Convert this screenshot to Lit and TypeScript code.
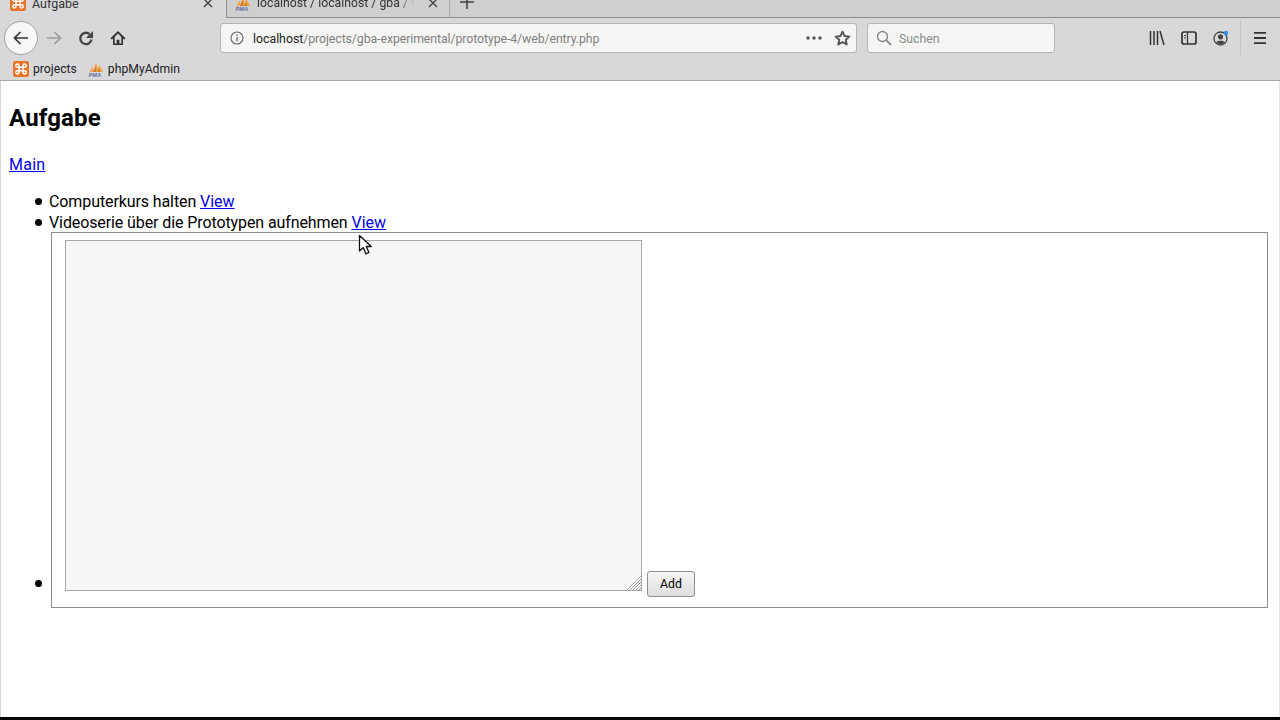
import { LitElement, html, css, svg } from "lit";
import { customElement } from "lit/decorators.js";

const xampp = svg`<svg class="fav" viewBox="0 0 16 16"><rect x="0" y="0" width="16" height="16" rx="2" fill="#e9752a"/><path d="M6 6V4.7A1.6 1.6 0 1 0 4.4 6.3H11.6A1.6 1.6 0 1 0 10 4.7V11.3A1.6 1.6 0 1 0 11.6 9.7H4.4A1.6 1.6 0 1 0 6 11.3V6" fill="none" stroke="#fff" stroke-width="1.5"/></svg>`;
const pma = svg`<svg class="fav" viewBox="0 0 16 16"><path d="M1.5 11 4.5 5.5 5.5 10.5zM5.5 10.5 8 1 10.5 10.5zM10.5 10.5 10.5 4 13 7 15 11z" fill="#f2a03c"/><path d="M5 11 7.5 5.5 8.5 11zM9.5 11l1-4 2 4z" fill="#d17a22"/><text x="0.5" y="15.8" font-size="5.6" font-weight="700" font-style="italic" font-family="Liberation Sans, sans-serif" fill="#5f6c99">PMA</text></svg>`;

@customElement("app-root")
export class AppRoot extends LitElement {
  static styles = css`
    :host { display: flex; flex-direction: column; height: 720px; overflow: hidden; position: relative;
      font-family: Roboto, sans-serif; background: #fff; color: #000; }
    .tabs { height: 18px; flex: none; display: flex; background: #cfcfcf; overflow: hidden; font-size: 12.5px; color: #333; }
    .tab { flex: none; display: flex; align-items: flex-end; box-sizing: border-box; position: relative; }
    .tab.active { width: 226px; height: 18px; background: #d8d8da; }
    .tab.other { width: 224px; height: 18px; border-left: 1px solid #8f8f8f; border-right: 1px solid #a8a8a8; border-bottom: 1px solid #8f8f8f; font-size: 12.25px; }
    .tab-inner { display: flex; align-items: center; height: 20px; width: 100%; box-sizing: border-box; flex: none; gap: 6px; }
    .tab.active .tab-inner { padding-left: 10px; margin-bottom: 5px; }
    .tab.other .tab-inner { padding-left: 8px; margin-bottom: 4px; }
    .tab-title { flex: 1; overflow: hidden; white-space: nowrap; }
    .tab.other .tab-title { -webkit-mask-image: linear-gradient(to right, #000 90%, transparent); mask-image: linear-gradient(to right, #000 90%, transparent); }
    .close { flex: none; width: 10px; height: 10px; margin: 0 13px 0 8px; }
    .tab.other .close { margin: 0 11px 0 8px; }
    .fillbar { flex: 1; border-bottom: 1px solid #8f8f8f; height: 18px; box-sizing: border-box; overflow: hidden; }
    .plus { display: block; margin: -5px 0 0 10px; width: 14px; height: 14px; }
    .nav { height: 40px; flex: none; display: flex; align-items: center; background: #d8d8da; }
    .back { margin-left: 4px; width: 34px; height: 34px; box-sizing: border-box; border-radius: 50%; border: 1px solid #a2a2a4; background: #f7f7f7; display: flex; align-items: center; justify-content: center; flex: none; }
    .btn { width: 32px; height: 32px; display: flex; align-items: center; justify-content: center; flex: none; }
    .ic { width: 16px; height: 16px; display: block; }
    .url { margin-left: 86px; width: 637px; height: 30px; box-sizing: border-box; flex: none; border: 1px solid #b5b5b8; border-radius: 3px; background: #f5f6f3; display: flex; align-items: center; font-size: 12.3px; }
    .info { width: 14px; height: 14px; margin-left: 9px; flex: none; }
    .address { margin-left: 9px; padding-top: 1px; flex: 1; color: #7f7f7f; white-space: nowrap; letter-spacing: -0.08px; }
    .address b { font-weight: 400; color: #222; letter-spacing: 0; }
    .dots { width: 16px; height: 4px; margin-right: 12px; flex: none; }
    .star { width: 17px; height: 17px; margin-right: 5px; flex: none; }
    .search { margin-left: 10px; width: 188px; height: 30px; box-sizing: border-box; flex: none; border: 1px solid #b5b5b8; border-radius: 3px; background: #f5f6f3; display: flex; align-items: center; font-size: 12.3px; color: #8a8a8a; }
    .search span { padding-top: 1px; }
    .search svg { width: 16px; height: 16px; margin-left: 8px; margin-right: 7px; flex: none; }
    .spacer { flex: 1; }
    .sep { width: 1px; height: 34px; background: #c4c4c6; margin: 0 3px; flex: none; }
    .endgap { width: 4px; flex: none; }
    .marks { height: 23px; flex: none; box-sizing: border-box; border-bottom: 1px solid #a9a9ac; background: #d8d8da; display: flex; align-items: center; font-size: 12.2px; color: #222; padding-left: 13px; padding-bottom: 1px; }
    .mark { display: flex; align-items: center; gap: 4px; margin-right: 11px; }
    .fav { width: 16px; height: 16px; flex: none; display: block; }
    .page { flex: 1; box-sizing: border-box; border-left: 1px solid #d4d4d4; border-right: 1px solid #e4e4e4; padding: 0 8px; font-size: 16px; line-height: 21px; min-height: 0; }
    h1 { font-size: 24px; font-weight: 700; line-height: 28px; margin: 23px 0 22px; letter-spacing: 0.15px; }
    p { margin: 0 0 16px; line-height: 21px; }
    p a { letter-spacing: 0.25px; }
    a { color: #0000ee; text-decoration: underline; }
    ul { margin: 0; padding-left: 40px; list-style: none; }
    li { position: relative; }
    li::before { content: ""; position: absolute; left: -14px; top: 7px; width: 7px; height: 7px; border-radius: 50%; background: #000; }
    li.with-form::before { top: auto; bottom: 21px; }
    .t { letter-spacing: -0.1px; }
    .box { box-sizing: border-box; width: 1217px; margin: -1px 0 0 2px; border: 1px solid #8d8d8d; padding: 7px 13px 16px; }
    .row { display: flex; align-items: flex-end; gap: 5px; }
    .area-wrap { position: relative; flex: none; width: 577px; height: 351px; }
    textarea { display: block; width: 100%; height: 100%; box-sizing: border-box; background: #f5f7f4; border: 1px solid #a9a9a9; resize: none; margin: 0; padding: 2px; outline: none; }
    .grip { position: absolute; right: 1px; bottom: 1px; width: 14px; height: 14px; }
    .add { width: 48px; height: 26px; box-sizing: border-box; margin-bottom: -6px; padding: 0; border: 1px solid #8e8e8e; border-radius: 3px; background: linear-gradient(#f6f6f6, #dedede); font: 12.3px Roboto, sans-serif; color: #000; }
    .bottom { height: 3px; flex: none; background: #050505; }
    .cursor { position: absolute; left: 358px; top: 234px; width: 14px; height: 22px; }
  `;

  render() {
    return html`
      <div class="tabs">
        <div class="tab active"><div class="tab-inner">${xampp}<span class="tab-title">Aufgabe</span>
          <svg class="close" viewBox="0 0 10 10"><path d="M1 1l8 8M9 1l-8 8" stroke="#444" stroke-width="1.4"/></svg></div></div>
        <div class="tab other"><div class="tab-inner">${pma}<span class="tab-title">localhost / localhost / gba / tasks</span>
          <svg class="close" viewBox="0 0 10 10"><path d="M1 1l8 8M9 1l-8 8" stroke="#444" stroke-width="1.4"/></svg></div></div>
        <div class="fillbar"><svg class="plus" viewBox="0 0 14 14"><path d="M7 0v14M0 7h14" stroke="#444" stroke-width="1.6"/></svg></div>
      </div>
      <div class="nav">
        <div class="back"><svg class="ic" viewBox="0 0 16 16"><path d="M7.5 2 1.5 8l6 6M2 8h13" fill="none" stroke="#333" stroke-width="1.7"/></svg></div>
        <div class="btn"><svg class="ic" viewBox="0 0 16 16"><path d="M8.5 2l6 6-6 6M14 8H1" fill="none" stroke="#9c9c9e" stroke-width="1.7"/></svg></div>
        <div class="btn"><svg class="ic" viewBox="0 0 16 16"><path d="M13.6 9.6A5.7 5.7 0 1 1 11.6 4" fill="none" stroke="#444" stroke-width="2.3"/><path d="M15 1v7H8z" fill="#444"/></svg></div>
        <div class="btn"><svg class="ic" viewBox="0 0 16 16"><path d="M8 1 .5 8.2l1.3 1.3L3 8.4V15h10V8.4l1.2 1.1 1.3-1.3zM6.6 13.4V9.8h2.8v3.6H11.3V7L8 3.6 4.7 7v6.4z" fill="#333" fill-rule="evenodd"/></svg></div>
        <div class="url">
          <svg class="info" viewBox="0 0 14 14"><circle cx="7" cy="7" r="6" fill="none" stroke="#666" stroke-width="1.1"/><path d="M7 6v4.2M7 3.6v1.3" stroke="#666" stroke-width="1.4"/></svg>
          <span class="address"><b>localhost</b>/projects/gba-experimental/prototype-4/web/entry.php</span>
          <svg class="dots" viewBox="0 0 16 4"><circle cx="2" cy="2" r="1.7" fill="#555"/><circle cx="8" cy="2" r="1.7" fill="#555"/><circle cx="14" cy="2" r="1.7" fill="#555"/></svg>
          <svg class="star" viewBox="0 0 16 16"><path d="M8 1.6l1.9 4.1 4.5.5-3.3 3 .9 4.4L8 11.4l-4 2.2.9-4.4-3.3-3 4.5-.5z" fill="none" stroke="#555" stroke-width="1.8" stroke-linejoin="round"/></svg>
        </div>
        <div class="search">
          <svg viewBox="0 0 16 16"><circle cx="6.5" cy="6.5" r="5" fill="none" stroke="#8a8a8a" stroke-width="1.5"/><path d="M10.2 10.2 15 15" stroke="#8a8a8a" stroke-width="1.8"/></svg>
          <span>Suchen</span>
        </div>
        <div class="spacer"></div>
        <div class="btn"><svg class="ic" viewBox="0 0 16 16"><path d="M1.5 1v14M5 1v14M8.5 1v14M11 1l4 14" fill="none" stroke="#333" stroke-width="1.5"/></svg></div>
        <div class="btn"><svg class="ic" viewBox="0 0 16 16"><rect x="1" y="2" width="14" height="12" rx="2" fill="none" stroke="#333" stroke-width="1.7"/><path d="M6.5 2v12M3 5.5h2M3 8h2" stroke="#333" stroke-width="1.2"/></svg></div>
        <div class="btn"><svg class="ic" viewBox="0 0 16 16"><circle cx="7.5" cy="8.5" r="6.5" fill="none" stroke="#444" stroke-width="1.3"/><circle cx="7.5" cy="6.8" r="2.6" fill="#444"/><path d="M3 12.5c1-2.4 8-2.4 9 0-2 2-7 2-9 0z" fill="#444"/><circle cx="13" cy="3" r="2.2" fill="#2a90f0"/></svg></div>
        <div class="sep"></div>
        <div class="btn"><svg class="ic" viewBox="0 0 16 16"><path d="M2 2.8h12M2 8h12M2 13.2h12" stroke="#333" stroke-width="1.8"/></svg></div>
        <div class="endgap"></div>
      </div>
      <div class="marks">
        <span class="mark">${xampp}<span>projects</span></span>
        <span class="mark">${pma}<span>phpMyAdmin</span></span>
      </div>
      <div class="page">
        <h1>Aufgabe</h1>
        <p><a href="#">Main</a></p>
        <ul>
          <li><span class="t">Computerkurs halten </span><a href="#">View</a></li>
          <li><span class="t">Videoserie über die Prototypen aufnehmen </span><a href="#">View</a></li>
          <li class="with-form"><div class="box"><div class="row">
            <div class="area-wrap"><textarea></textarea>
              <svg class="grip" viewBox="0 0 14 14"><path d="M14 0 0 14M14 3 3 14M14 6 6 14M14 9 9 14M14 12 12 14" stroke="#a6a6a6" stroke-width="1"/></svg></div>
            <button class="add">Add</button>
          </div></div></li>
        </ul>
      </div>
      <div class="bottom"></div>
      <svg class="cursor" viewBox="0 0 14 22"><path d="M1.5 1.5v15.5l3.8-3.4 2.6 6.2 3-1.3-2.6-6h5z" fill="#fff" stroke="#111" stroke-width="1.3" stroke-linejoin="round"/></svg>
    `;
  }
}
